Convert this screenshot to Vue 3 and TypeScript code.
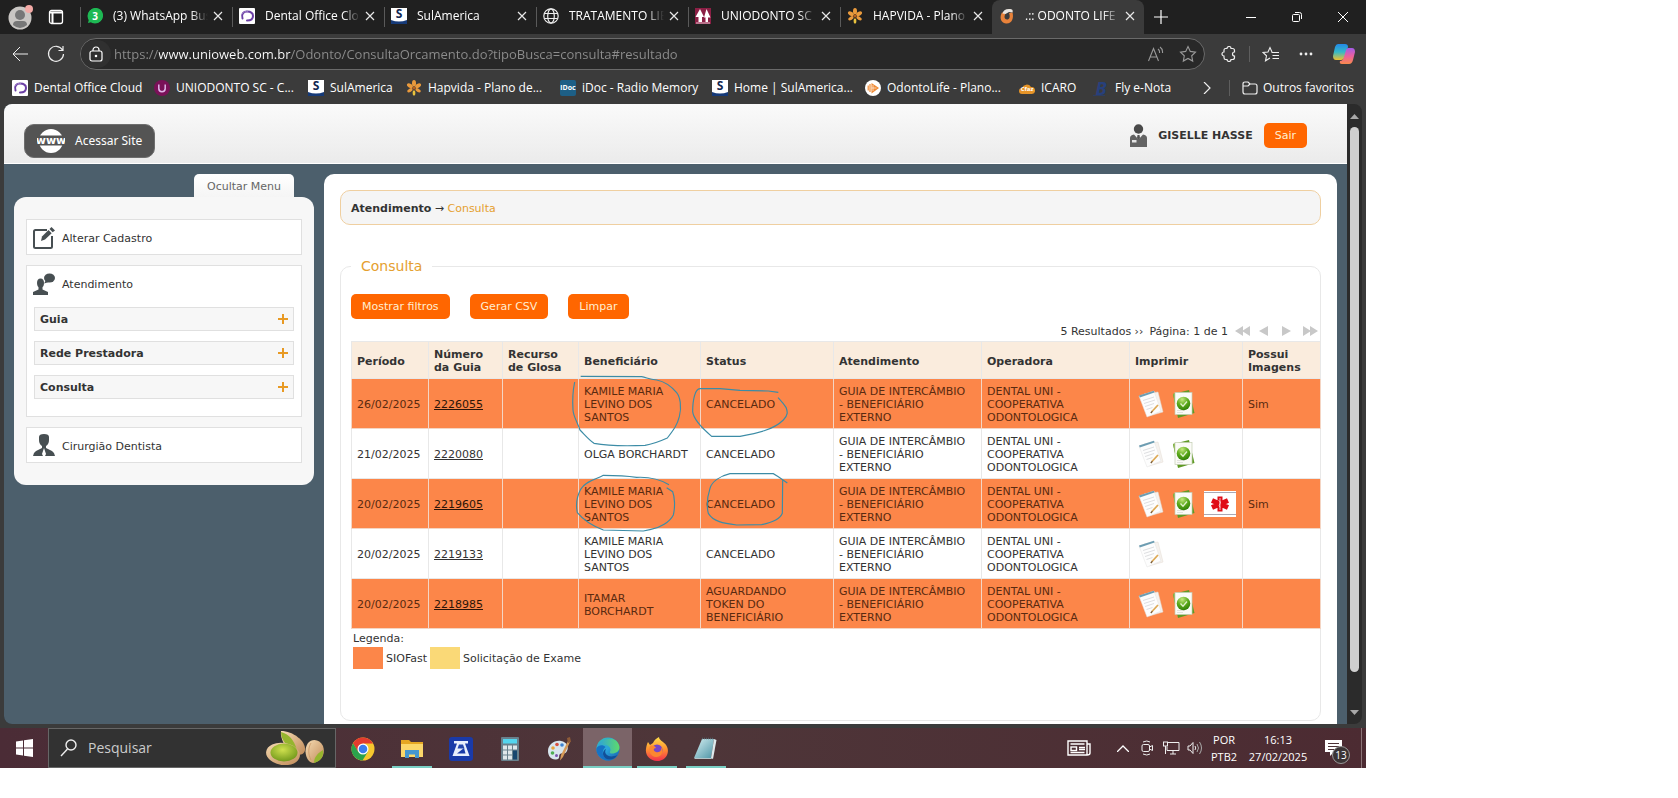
<script setup lang="ts">
import { ref } from 'vue'

interface Tab { icon: string; title: string; active?: boolean }
interface Bookmark { icon: string; title: string; width: number }
interface Row {
  date: string
  guide: string
  person: string
  status: string
  fast: boolean
  icons: string[]
  images: string
}

const tabs: Tab[] = [
  { icon: 'whats', title: '(3) WhatsApp Bus' },
  { icon: 'dental', title: 'Dental Office Clo' },
  { icon: 'sul', title: 'SulAmerica' },
  { icon: 'globe', title: 'TRATAMENTO LIB' },
  { icon: 'uniodonto', title: 'UNIODONTO SC' },
  { icon: 'flower', title: 'HAPVIDA - Plano' },
  { icon: 'odonto', title: '.:: ODONTO LIFE :', active: true },
]

const bookmarks: Bookmark[] = [
  { icon: 'dental', title: 'Dental Office Cloud', width: 142 },
  { icon: 'uni', title: 'UNIODONTO SC - C...', width: 154 },
  { icon: 'sul', title: 'SulAmerica', width: 98 },
  { icon: 'flower', title: 'Hapvida - Plano de...', width: 154 },
  { icon: 'idoc', title: 'iDoc - Radio Memory', width: 152 },
  { icon: 'sul', title: 'Home | SulAmerica...', width: 153 },
  { icon: 'life', title: 'OdontoLife - Plano...', width: 154 },
  { icon: 'cfaz', title: 'ICARO', width: 74 },
  { icon: 'fly', title: 'Fly e-Nota', width: 80 },
]

// Letters shown on top of the site icons that carry lettering.
const marks: Record<string, string> = { whats: '3', sul: 'S', idoc: 'iDoc', cfaz: 'Cfaz', fly: 'B' }

const url = ref('https://www.unioweb.com.br/Odonto/ConsultaOrcamento.do?tipoBusca=consulta#resultado')
const query = ref('')
const submenus = ['Guia', 'Rede Prestadora', 'Consulta']
const columns = ['Período', 'Número da Guia', 'Recurso de Glosa', 'Beneficiário', 'Status', 'Atendimento', 'Operadora', 'Imprimir', 'Possui Imagens']
const service = 'GUIA DE INTERCÂMBIO\n- BENEFICIÁRIO\nEXTERNO'
const operator = 'DENTAL UNI -\nCOOPERATIVA\nODONTOLOGICA'

const rows: Row[] = [
  { date: '26/02/2025', guide: '2226055', person: 'KAMILE MARIA\nLEVINO DOS\nSANTOS', status: 'CANCELADO', fast: true, icons: ['note', 'check'], images: 'Sim' },
  { date: '21/02/2025', guide: '2220080', person: 'OLGA BORCHARDT', status: 'CANCELADO', fast: false, icons: ['note', 'check'], images: '' },
  { date: '20/02/2025', guide: '2219605', person: 'KAMILE MARIA\nLEVINO DOS\nSANTOS', status: 'CANCELADO', fast: true, icons: ['note', 'check', 'medical'], images: 'Sim' },
  { date: '20/02/2025', guide: '2219133', person: 'KAMILE MARIA\nLEVINO DOS\nSANTOS', status: 'CANCELADO', fast: false, icons: ['note'], images: '' },
  { date: '20/02/2025', guide: '2218985', person: 'ITAMAR\nBORCHARDT', status: 'AGUARDANDO\nTOKEN DO\nBENEFICIÁRIO', fast: true, icons: ['note', 'check'], images: '' },
]

const printLabels: Record<string, string> = {
  note: 'Imprimir guia',
  check: 'Guia autorizada',
  medical: 'Urgência',
}

const apps = [
  { icon: 'chrome', label: 'Chrome', state: '' },
  { icon: 'folder', label: 'Explorador de Arquivos', state: 'open' },
  { icon: 'scan', label: 'Scanner', state: '' },
  { icon: 'calc', label: 'Calculadora', state: '' },
  { icon: 'paint', label: 'Paint', state: '' },
  { icon: 'edge', label: 'Edge', state: 'current' },
  { icon: 'firefox', label: 'Firefox', state: 'open' },
  { icon: 'notepad', label: 'Bloco de Notas', state: 'open' },
]
</script>

<template>
  <svg class="sprite" aria-hidden="true">
    <defs>
      <linearGradient id="gEdge" x1="0" y1="0" x2="1" y2="1"><stop offset="0" stop-color="#35c1b0" /><stop offset=".5" stop-color="#2aa3dc" /><stop offset="1" stop-color="#1559a8" /></linearGradient>
      <linearGradient id="gEdgeTop" x1="0" y1="0" x2="1" y2="0"><stop offset="0" stop-color="#2b9fe0" /><stop offset="1" stop-color="#5edb6b" /></linearGradient>
      <linearGradient id="gCopA" x1="0" y1="0" x2="0" y2="1"><stop offset="0" stop-color="#2389e8" /><stop offset=".5" stop-color="#35b9c8" /><stop offset="1" stop-color="#f0c02e" /></linearGradient>
      <linearGradient id="gCopB" x1="0" y1="0" x2="0" y2="1"><stop offset="0" stop-color="#a25be8" /><stop offset=".5" stop-color="#ec5f9e" /><stop offset="1" stop-color="#f88a4c" /></linearGradient>
      <linearGradient id="gFire" x1="0" y1="0" x2="0" y2="1"><stop offset="0" stop-color="#ffdf4a" /><stop offset=".5" stop-color="#ff9330" /><stop offset="1" stop-color="#f2304d" /></linearGradient>
      <radialGradient id="gGreen" cx=".4" cy=".2" r=".85"><stop offset="0" stop-color="#c3e67c" /><stop offset=".5" stop-color="#5dab1c" /><stop offset="1" stop-color="#2c7a05" /></radialGradient>
      <radialGradient id="gNut" cx=".45" cy=".35" r=".7"><stop offset="0" stop-color="#cfe04e" /><stop offset="1" stop-color="#6c9418" /></radialGradient>
      <linearGradient id="gShell" x1="0" y1="0" x2="1" y2="1"><stop offset="0" stop-color="#f6dcb4" /><stop offset="1" stop-color="#c08a58" /></linearGradient>
      <linearGradient id="gPad" x1="0" y1="0" x2="1" y2="1"><stop offset="0" stop-color="#d6f0f2" /><stop offset="1" stop-color="#4d94a6" /></linearGradient>
    </defs>
    <symbol id="whats" viewBox="0 0 16 16"><path d="M1 15l1-4a7.500 7.500 0 1 1 3 3z" fill="#1eb954" /><circle cx="8" cy="8" r="7.500" fill="#1eb954" /></symbol>
    <symbol id="dental" viewBox="0 0 16 16"><rect width="16" height="16" rx="1" fill="#fff" /><path d="M3.500 10.500C2 6 4.500 3.500 8 3.500c3.500 0 6 1.500 6 4.500s-2.500 4.500-6 4.500" fill="none" stroke="#6b3fa5" stroke-width="2" stroke-linecap="round" /><path d="M3 6c1.500-2.500 4-3 6-2.500" fill="none" stroke="#9a7bc6" stroke-width="1" /></symbol>
    <symbol id="sul" viewBox="0 0 16 16"><rect width="16" height="16" fill="#fff" /><path d="M0 12q8 3 16 0v4H0z" fill="#163a78" /></symbol>
    <symbol id="globe" viewBox="0 0 16 16"><g fill="none" stroke="#eee" stroke-width="1.200"><circle cx="8" cy="8" r="7.200" /><ellipse cx="8" cy="8" rx="3.300" ry="7.200" /><path d="M1.500 5.500h13M1.500 10.500h13" /></g></symbol>
    <symbol id="uniodonto" viewBox="0 0 16 16"><rect width="16" height="16" fill="#8b1f45" /><path d="M5 1l4 8h-2v5H3.500V9H.5zM11.500 1l4 8.500H13v4.500h-2.500V9.500H9z" fill="#fff" /><path d="M1 15h14" stroke="#e9c7d3" stroke-width="1" /></symbol>
    <symbol id="flower" viewBox="0 0 16 16"><g fill="#ea9a3c"><ellipse cx="8" cy="3.300" rx="2" ry="3.200" /><ellipse cx="8" cy="3.300" rx="2" ry="3.200" transform="rotate(60 8 8)" /><ellipse cx="8" cy="3.300" rx="2" ry="3.200" transform="rotate(-60 8 8)" /><ellipse cx="8" cy="3.300" rx="1.700" ry="3" transform="rotate(120 8 8)" /><ellipse cx="8" cy="3.300" rx="1.700" ry="3" transform="rotate(-120 8 8)" /></g><ellipse cx="8" cy="13" rx="1.400" ry="2.800" fill="#e8c23e" /><circle cx="8" cy="8" r="1.500" fill="#b8601e" /></symbol>
    <symbol id="odonto" viewBox="0 0 16 16"><path d="M3 4.500C.5 8 1 15 7 15.500c6 .5 8-5.500 6.500-11l-3.500.5c1.500 4 .5 6.500-2 6.500S4.500 8.500 7 5z" fill="#e8823a" /><path d="M3.500 5.500C4 2 8 0 13 1.500c1 1 .8 2 .5 3L10 4 6.500 6z" fill="#e9e4de" /></symbol>
    <symbol id="uni" viewBox="0 0 16 16"><circle cx="8" cy="8" r="8" fill="#7a1158" /><path d="M4.800 4.500v4a3.200 3.200 0 0 0 6.400 0v-4" fill="none" stroke="#e0b6e8" stroke-width="1.500" /></symbol>
    <symbol id="idoc" viewBox="0 0 16 16"><rect width="16" height="16" rx="2" fill="#1d5f86" /></symbol>
    <symbol id="life" viewBox="0 0 16 16"><circle cx="8" cy="8" r="8" fill="#fff" /><path d="M6.500 3l7.500 5-7.500 5.500z" fill="#ef8a34" /><path d="M3.200 5.500v5M5 4v8" stroke="#ef8a34" stroke-width="1.200" /><path d="M8 5v6M6.500 8h5" stroke="#fff" stroke-width=".6" /></symbol>
    <symbol id="cfaz" viewBox="0 0 16 16"><path d="M3 13a3 3 0 0 1 0-6 5 5 0 0 1 9-1 3.500 3.500 0 0 1 1 7z" fill="#e69428" /></symbol>
    <symbol id="fly" viewBox="0 0 16 16"><path d="M0 15.500h12" stroke="#27407c" stroke-width=".6" /></symbol>
    <symbol id="note" viewBox="0 0 26 28"><path d="M6 4l14-2 5 20-14 4z" fill="#f6f2ee" stroke="#e2dad2" stroke-width=".5" /><path d="M1 6l15-5 7 20-14 6z" fill="#fdfdfd" stroke="#e2e2e2" stroke-width=".5" /><path d="M1 5.500L16 .8l.5 1.700L1.800 7.500z" fill="#6d9db2" /><path d="M5 10.500l11-3.500M6 13.500l11-3.500M7 16.500l9-3M8.500 19.500l6-2" stroke="#d4d6d8" stroke-width=".8" /><path d="M14 21.500l6-6.500" stroke="#dda955" stroke-width="1.800" /><path d="M12.800 23l1.600-1.800" stroke="#7a5a34" stroke-width="1.300" /></symbol>
    <symbol id="check" viewBox="0 0 24 28"><path d="M1 4l16-4 1 4L22.500 23 6 28z" fill="#5f9a25" /><path d="M1 4l3-1 2 24z" fill="#86b548" /><rect x="3" y="2.500" width="17" height="22" fill="#fbfbf7" stroke="#c3cdb2" stroke-width=".7" /><path d="M5 20.500h8M5 22.500h6" stroke="#dcdcd6" stroke-width=".8" /><circle cx="11.500" cy="13.500" r="6.800" fill="url(#gGreen)" /><path d="M8.500 13.500l2.500 2.700 4-4.700" fill="none" stroke="#e2f0cc" stroke-width="1.300" /></symbol>
    <symbol id="medical" viewBox="0 0 32 26"><rect width="32" height="26" fill="#fff" /><path d="M0 1.500h32M0 23.500h32" stroke="#aaa8b4" stroke-width="1" /><g stroke="#e00d16" stroke-width="5"><path d="M16 5.500v15M8 9.500l16 7M8 16.500l16-7" /></g><path d="M16 7v12M14.500 9.500q3 1 1.500 3t0 4" fill="none" stroke="#fff" stroke-width=".7" /></symbol>
    <symbol id="chrome" viewBox="0 0 24 24"><circle cx="12" cy="12" r="11.500" fill="#f7c72e" /><path d="M2 6.200A11.500 11.500 0 0 1 22 6.500H12l-5 8.500z" fill="#e33b2e" /><path d="M2 6.200A11.500 11.500 0 0 0 11.500 23.500L17 14.500H7z" fill="#2ba24c" /><circle cx="12" cy="12" r="5.500" fill="#fff" /><circle cx="12" cy="12" r="4.300" fill="#3b7ded" /></symbol>
    <symbol id="folder" viewBox="0 0 24 24"><path d="M1 3h8l2 2h12v15H1z" fill="#e5a723" /><path d="M1 7h22v13H1z" fill="#fbd76a" /><path d="M5 21v-8h14v8h-4v-3.500H9V21z" fill="#4597d0" /></symbol>
    <symbol id="scan" viewBox="0 0 24 24"><rect width="24" height="24" rx="3" fill="#1a3aa8" /><path d="M5 4h14v2.500H5zM8 6.500h8L20.500 19h-17z" fill="#e9eefc" /><path d="M10 7.500h4l1.500 4h-7z" fill="#2747ac" /><path d="M8 16.500l7-5.500 1.500 5.500z" fill="#1a3aa8" /></symbol>
    <symbol id="calc" viewBox="0 0 24 24"><rect x="3" width="18" height="24" rx="1" fill="#68808c" /><rect x="5" y="2" width="14" height="4.500" fill="#54d5ee" /><g fill="#dfe7ea"><path d="M5 8.500h4v4H5zM10 8.500h4v4h-4zM15 8.500h4v4h-4zM5 13.500h4v4H5zM10 13.500h4v4h-4zM5 18.500h4v4H5zM10 18.500h4v4h-4z" /></g><path d="M15 13.500h4v9h-4z" fill="#18476e" /></symbol>
    <symbol id="paint" viewBox="0 0 24 24"><path d="M1 14C1 8 7 3 14 4c6 1 8 6 6 10s-5 1-7 3 1 5-4 5.500C4 23 1 19 1 14z" fill="#d8e6ee" /><circle cx="6" cy="11" r="1.800" fill="#e8a33b" /><circle cx="10" cy="7.500" r="1.800" fill="#d7503f" /><circle cx="15" cy="8" r="1.800" fill="#3e83d0" /><circle cx="5.500" cy="16" r="1.800" fill="#4dae54" /><circle cx="9.500" cy="18.500" r="1.500" fill="#7b55b0" /><path d="M21 4l2 1-7 15-3 3.500 1-5.500z" fill="#d69a58" /><path d="M20 1l3-1 1 5-3 1z" fill="#8f5c38" /></symbol>
    <symbol id="edge" viewBox="0 0 24 24"><circle cx="12" cy="12" r="11.500" fill="url(#gEdge)" /><path d="M.8 10.500C3 2 19-3 23 8c2 6-3 9-8 8.500-2-.5-1-2-.5-3.500C14 6 4 7 .8 10.500z" fill="url(#gEdgeTop)" /><path d="M9.500 10c-5 4-3 12 5 13.300C6 25-1 17 .6 11 3 7.500 7 7.500 9.500 10z" fill="#1672c4" /><path d="M10 12c-3 5 3 10 11.500 6C17 25 8 23.500 7 17c0-2.500 1-4 3-5z" fill="#124f98" /></symbol>
    <symbol id="firefox" viewBox="0 0 24 24"><path d="M3 5l2 3 3-2c1-3 4-5 6-6 0 4 7 5 8.500 11C24.500 18 19 24 12 24S0 18 1 12c.3-3 1-5 2-7z" fill="url(#gFire)" /><circle cx="12" cy="13" r="5.500" fill="#7546c8" /><path d="M5 9c3-1 5 0 6 2-3 0-3 3 0 4 4 1 6-2 5-5 3 4 1 10-5 10-5 0-8-6-6-11z" fill="#fb8631" /></symbol>
    <symbol id="notepad" viewBox="0 0 24 24"><path d="M8 2h12l-3 19H0z" fill="url(#gPad)" /><path d="M20 2l2.500 1-3.500 19-2-1z" fill="#dfe9eb" /><path d="M0 21h17l2 1H1z" fill="#b4c4c8" /><path d="M8 1.500h12" stroke="#56636c" stroke-width="1.500" stroke-dasharray="1 1" /></symbol>
    <symbol id="pistachio" viewBox="0 0 58 34"><path d="M15 0c12 0 25 10 24 19-1 6-9 6-14 2-6-5-11-13-10-21z" fill="url(#gShell)" /><path d="M15 1c8 2 13 8 16 18C22 17 15 10 15 1z" fill="#95b52e" /><ellipse cx="17" cy="23" rx="17" ry="11" fill="url(#gShell)" transform="rotate(8 17 23)" /><ellipse cx="18" cy="21.500" rx="13.500" ry="9" fill="url(#gNut)" /><path d="M42 12c4-5 12-4 15 3 3 8-2 16-10 17-7-1-10-13-5-20z" fill="url(#gShell)" /><path d="M57 19c1 6-2 11-9 13 0-6 4-10 9-13z" fill="#95b52e" /><path d="M45 12c-3 5-3 11 0 17" fill="none" stroke="#c9935f" stroke-width=".7" /></symbol>
  </svg>

  <div class="desktop">
    <header class="tabstrip">
      <button class="avatar" aria-label="Perfil">
        <svg width="26" height="26" viewBox="0 0 26 26"><circle cx="12" cy="14" r="11.500" fill="#c9c6c3" /><circle cx="12" cy="11" r="5" fill="#777" /><path d="M5 21q0-4 4-4h6q4 0 4 4-7 6-14 0z" fill="#777" /><circle cx="21" cy="5" r="4" fill="#f3aaa6" /></svg>
      </button>
      <button class="tabmenu" aria-label="Menu de guias">
        <svg width="16" height="16" viewBox="0 0 16 16" fill="none" stroke="#fff" stroke-width="1.300"><rect x="1.500" y="1.500" width="13" height="13" rx="2" /><path d="M1.500 3.500h13M4.500 4v10.500" stroke-width="2" /></svg>
      </button>
      <div v-for="tab in tabs" :key="tab.title" class="tab" :class="{ active: tab.active }">
        <span class="fav" aria-hidden="true"><svg><use :href="'#' + tab.icon" /></svg><b v-if="marks[tab.icon]" :class="'m-' + tab.icon">{{ marks[tab.icon] }}</b></span>
        <button class="tab-title">{{ tab.title }}</button>
        <button class="tab-close" :aria-label="'Fechar ' + tab.title">
          <svg width="10" height="10" viewBox="0 0 10 10" stroke="#e8e8e8" stroke-width="1.200"><path d="M1 1l8 8M9 1l-8 8" /></svg>
        </button>
      </div>
      <button class="newtab" aria-label="Nova guia"><svg width="14" height="14" viewBox="0 0 14 14" stroke="#fff" stroke-width="1.200"><path d="M7 0v14M0 7h14" /></svg></button>
      <div class="winctl">
        <button aria-label="Minimizar"><svg width="10" height="10" viewBox="0 0 10 10" stroke="#fff"><path d="M0 5.500h10" /></svg></button>
        <button aria-label="Restaurar"><svg width="10" height="10" viewBox="0 0 10 10" fill="none" stroke="#fff"><rect x=".5" y="2.500" width="7" height="7" rx="1" /><path d="M3 .5h4.500q2 0 2 2V7" /></svg></button>
        <button aria-label="Fechar"><svg width="10" height="10" viewBox="0 0 10 10" stroke="#fff"><path d="M0 0l10 10M10 0L0 10" /></svg></button>
      </div>
    </header>

    <div class="toolbar">
      <button class="nav" aria-label="Voltar"><svg width="16" height="16" viewBox="0 0 16 16" fill="none" stroke="#eee"><path d="M16 8H1M8 1L1 8l7 7" /></svg></button>
      <button class="nav" aria-label="Atualizar"><svg width="18" height="18" viewBox="0 0 18 18" fill="none" stroke="#eee" stroke-width="1.200"><path d="M15.500 5A7.500 7.500 0 1 0 16.500 9M16 1v4.500h-4.500" /></svg></button>
      <div class="address">
        <span class="lock"><svg width="14" height="16" viewBox="0 0 14 16" fill="none" stroke="#fff" stroke-width="1.200"><rect x="1" y="5" width="12" height="10" rx="2" /><path d="M4 5V4a3 3 0 0 1 6 0v1" /><circle cx="7" cy="10" r=".7" fill="#fff" /></svg></span>
        <input v-model="url" class="url" type="text" aria-label="Endereço" />
        <button class="addr-btn" aria-label="Ler em voz alta"><svg width="16" height="16" viewBox="0 0 16 16" fill="none" stroke="#999" stroke-width="1.100"><path d="M.5 15L5.500 2.500l5 12.500M2.500 11h6M10 3q2 1.500 1.500 4M12 1q3 2 2.500 6" /></svg></button>
        <button class="addr-btn" aria-label="Favoritar"><svg width="18" height="18" viewBox="0 0 18 18" fill="none" stroke="#999" stroke-width="1.100"><path d="M9 1.500l2.300 4.900 5.200.7-3.800 3.700 1 5.300L9 13.500 4.300 16.100l1-5.300L1.500 7.100l5.200-.7z" /></svg></button>
      </div>
      <button class="tool" aria-label="Extensões"><svg width="16" height="16" viewBox="0 0 16 16" fill="none" stroke="#eee" stroke-width="1.200"><path d="M4.500 2.500H6a2 2 0 0 1 4 0h1.500q2 0 2 2V6a2 2 0 1 0 0 4v1.500q0 2-2 2H10a2 2 0 0 1-4 0H4.500q-1.500 0-1.500-2V10a2 2 0 0 1 0-4V4.500q0-2 1.500-2z" /></svg></button>
      <span class="vline"></span>
      <button class="tool" aria-label="Favoritos"><svg width="17" height="16" viewBox="0 0 17 16" fill="none" stroke="#eee" stroke-width="1.100"><path d="M10 6l-2-4.500L6 6l-5 .5 3.500 3.300-1 5L8 12M9.500 6.500H17M10.500 9.500H17M10.500 12.500H17" /></svg></button>
      <button class="tool more" aria-label="Mais"><svg width="14" height="4" viewBox="0 0 14 4" fill="#eee"><circle cx="2" cy="2" r="1.400" /><circle cx="7" cy="2" r="1.400" /><circle cx="12" cy="2" r="1.400" /></svg></button>
      <button class="tool copilot" aria-label="Copilot"><svg width="22" height="20" viewBox="0 0 22 20"><path d="M5 0h7q3 0 3 3l-3 9q-1 4-4 4H3q-3 0-3-4L2 3q1-3 3-3z" fill="url(#gCopA)" /><path d="M15 4h4q3 0 3 4l-2 8q-1 4-4 4H9q-3 0-2-3 3 0 4-4l2-7q1-2 2-2z" fill="url(#gCopB)" /></svg></button>
    </div>

    <nav class="bookmarks" aria-label="Favoritos">
      <a v-for="b in bookmarks" :key="b.title" href="#" :style="{ flexBasis: b.width + 'px' }">
        <span class="fav" aria-hidden="true"><svg><use :href="'#' + b.icon" /></svg><b v-if="marks[b.icon]" :class="'m-' + b.icon">{{ marks[b.icon] }}</b></span>{{ b.title }}
      </a>
      <button class="chev" aria-label="Mais favoritos"><svg width="8" height="12" viewBox="0 0 8 12" fill="none" stroke="#eee" stroke-width="1.200"><path d="M1 0l6 6-6 6" /></svg></button>
      <span class="vline"></span>
      <a href="#" class="others"><svg width="16" height="14" viewBox="0 0 16 14" fill="none" stroke="#eee" stroke-width="1.200"><path d="M1 3q0-2 2-2h3l2 2h5q2 0 2 2v6q0 2-2 2H3q-2 0-2-2zM1 5h5l2-2" /></svg>Outros favoritos</a>
    </nav>

    <div class="viewport">
      <div class="page">
        <div class="banner">
          <a href="#" class="site">
            <svg width="28" height="24" viewBox="0 0 28 24" aria-hidden="true"><circle cx="14" cy="12" r="12" fill="#fff" /><path d="M0 6.500h28v10H0z" fill="#545454" /><text x="14" y="15" text-anchor="middle" font-size="11" font-weight="700" font-family="DejaVu Sans, sans-serif" fill="#fff">www</text></svg>
            Acessar Site
          </a>
          <div class="user">
            <svg width="17" height="23" viewBox="0 0 17 23"><circle cx="8.500" cy="5" r="4.700" fill="#4a4a4a" /><path d="M0 23v-9q0-3 4-3.500l4.500 5 4.500-5q4 .5 4 3.500v9z" fill="#636363" /><path d="M7.500 11h2l.5 3-1.500 2L7 14z" fill="#555" /><path d="M2 16h4.500v2.500H2z" fill="#e4e4e4" /></svg>
            <strong>GISELLE HASSE</strong>
            <button class="btn">Sair</button>
          </div>
        </div>

        <div class="body">
          <aside class="side">
            <button class="hide-menu">Ocultar Menu</button>
            <nav class="menu" aria-label="Menu principal">
              <div class="box">
                <a href="#"><svg width="22" height="22" viewBox="0 0 22 22" fill="none" stroke="#474f52"><path d="M14 3H2.500Q1 3 1 4.500v15Q1 21 2.500 21h15q1.500 0 1.500-1.500V9" stroke-width="2" /><path d="M8 14l1-4.500L15.500 3l3.200 3.200L12 12.500z" fill="#474f52" stroke="none" /><path d="M16.500 2l2-2L22 3.500l-2.300 1.700z" fill="#474f52" stroke="none" /></svg>Alterar Cadastro</a>
              </div>
              <div class="box">
                <a href="#"><svg width="22" height="22" viewBox="0 0 22 22" fill="#474f52"><ellipse cx="7.500" cy="10" rx="3.500" ry="4.500" /><path d="M5.500 12h4v4.500l5.500 2.500v3H0v-3l5.500-2.500z" /><ellipse cx="16.500" cy="5" rx="5.500" ry="4.600" /><path d="M13 7l-2 3.500 5-1.500z" /></svg>Atendimento</a>
                <div class="subs">
                  <button v-for="s in submenus" :key="s" class="sub">
                    {{ s }}<svg width="10" height="10" viewBox="0 0 10 10" stroke="#e89a24" stroke-width="2"><path d="M5 0v10M0 5h10" /></svg>
                  </button>
                </div>
              </div>
              <div class="box">
                <a href="#"><svg width="22" height="24" viewBox="0 0 22 24" fill="#474f52"><path d="M6 3q0-3 5-3t5 3v3q0 4-3 6v2l6 3q3 2 3 5H0q0-3 3-5l6-3v-2Q6 10 6 6z" /><path d="M11 14l2 6-2 4-2-4z" fill="#fff" /></svg>Cirurgião Dentista</a>
              </div>
            </nav>
          </aside>

          <main class="content">
            <p class="crumb"><strong>Atendimento</strong> → <a href="#">Consulta</a></p>
            <fieldset>
              <legend>Consulta</legend>
              <div class="actions">
                <button class="btn">Mostrar filtros</button>
                <button class="btn">Gerar CSV</button>
                <button class="btn">Limpar</button>
              </div>
              <div class="pager">
                <span>5 Resultados ››</span><span>Página: 1 de 1</span>
                <button aria-label="Primeira"><svg width="15" height="10" viewBox="0 0 15 10" fill="#c8c8c8"><path d="M8 0v10L0 5zM15 0v10L7 5z" /></svg></button>
                <button aria-label="Anterior"><svg width="15" height="10" viewBox="0 0 15 10" fill="#c8c8c8"><path d="M11 0v10L2 5z" /></svg></button>
                <button aria-label="Próxima"><svg width="15" height="10" viewBox="0 0 15 10" fill="#c8c8c8"><path d="M3 0v10l9-5z" /></svg></button>
                <button aria-label="Última"><svg width="15" height="10" viewBox="0 0 15 10" fill="#c8c8c8"><path d="M0 0v10l8-5zM7 0v10l8-5z" /></svg></button>
              </div>
              <div class="grid">
                <table>
                  <colgroup>
                    <col v-for="(c, i) in columns" :key="c" :class="'c' + i" />
                  </colgroup>
                  <thead><tr><th v-for="c in columns" :key="c" scope="col">{{ c }}</th></tr></thead>
                  <tbody>
                    <tr v-for="r in rows" :key="r.guide" :class="{ fast: r.fast }">
                      <td>{{ r.date }}</td>
                      <td><a href="#">{{ r.guide }}</a></td>
                      <td></td>
                      <td>{{ r.person }}</td>
                      <td>{{ r.status }}</td>
                      <td>{{ service }}</td>
                      <td>{{ operator }}</td>
                      <td class="print-cell">
                        <div class="prints">
                          <button v-for="i in r.icons" :key="i" :aria-label="printLabels[i]"><svg :class="i"><use :href="'#' + i" /></svg></button>
                        </div>
                      </td>
                      <td>{{ r.images }}</td>
                    </tr>
                  </tbody>
                </table>
                <svg class="ink" viewBox="33 63 1440 630" fill="none" stroke="#3c8ca6" stroke-width="3.500" aria-hidden="true">
                  <path d="M704 186C698 215 697 240 699 270C700 290 712 305 720 330C735 345 745 358 762 370C800 377 870 378 915 376C940 372 960 364 982 354C1000 330 1012 315 1018 290C1026 260 1020 230 1010 218C995 200 975 185 950 180C925 178 920 172 905 170L722 169" />
                  <path d="M1315 217L1285 213L1200 211L1140 206L1080 206C1065 206 1058 240 1058 275C1060 295 1075 315 1115 349L1200 349C1250 340 1300 330 1330 300C1345 285 1343 275 1338 262C1330 250 1325 245 1314 233" />
                  <path d="M987 494C960 478 930 470 890 472C850 466 820 466 790 466C770 478 740 480 722 508C708 535 708 560 712 578C730 600 750 615 790 630L910 633L930 629C960 625 990 605 1000 585C1006 560 1004 530 998 515L980 503" />
                  <path d="M1342 489L1315 470L1300 461L1170 461C1140 468 1115 485 1110 505C1102 530 1100 560 1105 580C1120 605 1150 610 1190 615L1265 614C1295 608 1320 598 1327 580L1328 480" />
                </svg>
              </div>
              <div class="legend-title">Legenda:</div>
              <div class="legend-row">
                <span class="swatch orange"></span><span>SIOFast</span>
                <span class="swatch yellow"></span><span>Solicitação de Exame</span>
              </div>
            </fieldset>
          </main>
        </div>
      </div>
      <div class="scroll" aria-hidden="true">
        <svg width="9" height="5" viewBox="0 0 9 5" fill="#a8a8a8"><path d="M0 5l4.500-5L9 5z" /></svg>
        <div class="thumb"></div>
        <svg width="9" height="5" viewBox="0 0 9 5" fill="#a8a8a8"><path d="M0 0l4.500 5L9 0z" /></svg>
      </div>
    </div>

    <footer class="taskbar">
      <button class="start" aria-label="Iniciar"><svg width="17" height="18" viewBox="0 0 17 18" fill="#fff"><path d="M0 2.500l7-1V8.500H0zM8 1.300L17 0v8.500H8zM0 9.500h7v7l-7-1zM8 9.500h9V18l-9-1.300z" /></svg></button>
      <label class="search">
        <svg width="17" height="18" viewBox="0 0 17 18" fill="none" stroke="#eee" stroke-width="1.400"><circle cx="11" cy="6" r="5" /><path d="M7.500 10L1 17" /></svg>
        <input v-model="query" type="text" placeholder="Pesquisar" aria-label="Pesquisar" />
        <svg class="nuts" aria-hidden="true"><use href="#pistachio" /></svg>
      </label>
      <button v-for="a in apps" :key="a.icon" class="app" :class="a.state" :aria-label="a.label"><svg><use :href="'#' + a.icon" /></svg></button>
      <div class="tray">
        <button class="news" aria-label="Notícias"><svg width="24" height="16" viewBox="0 0 24 16" fill="none" stroke="#fff" stroke-width="1.400"><path d="M1 1h19v14H1zM20 4h3v9q0 2-3 2" /><path d="M3.500 4h14M12 7.500h6M12 9.500h6M3.500 12.500h14" /><rect x="4" y="7" width="5.500" height="3.500" /></svg></button>
        <button class="tr" aria-label="Mostrar ícones ocultos"><svg width="12" height="7" viewBox="0 0 12 7" fill="none" stroke="#fff" stroke-width="1.300"><path d="M0 7l6-6 6 6" /></svg></button>
        <button class="tr" aria-label="Câmera"><svg width="12" height="16" viewBox="0 0 12 16" fill="none" stroke="#eee"><rect x="1" y="4.500" width="7.500" height="7" rx="1.500" /><path d="M8.500 7l3-1.500v5L8.500 9M2 2q4-2 7 0M2 14q4 2 7 0" /></svg></button>
        <button class="tr" aria-label="Rede"><svg width="17" height="14" viewBox="0 0 17 14" fill="none" stroke="#eee"><path d="M5 1.500h11v8H4V6M10 9.500v3.500M7 13h6M2.500 5v8" /><rect x=".5" y="1" width="4" height="4" /></svg></button>
        <button class="tr" aria-label="Volume"><svg width="16" height="14" viewBox="0 0 16 14" fill="none" stroke="#eee"><path d="M1 5h2l3-3.500v11L3 9H1zM8 5q1.500 2 0 4" /><path d="M10 3q3 4 0 8M12.500 1q4 6 0 12" stroke="#aaa" /></svg></button>
        <div class="lang"><span>POR</span><span>PTB2</span></div>
        <div class="clock"><span>16:13</span><span>27/02/2025</span></div>
        <button class="notif" aria-label="Notificações">
          <svg width="17" height="17" viewBox="0 0 17 17"><path d="M0 0h17v12h-8l-4 4v-4H0z" fill="#fff" /><path d="M3 3.500h11M3 6.500h11M3 9.500h7" stroke="#4d3237" /></svg>
          <span class="badge">13</span>
        </button>
        <span class="peek"></span>
      </div>
    </footer>
  </div>
</template>

<style>
html, body { margin: 0; background: #fff; }
#app { padding-right: 312px; }
</style>

<style scoped>
* { box-sizing: border-box; }
button { border: 0; padding: 0; margin: 0; background: none; color: inherit; font: inherit; cursor: pointer; }
svg { display: block; flex: none; }
a { color: inherit; text-decoration: none; }
.sprite { position: absolute; width: 0; height: 0; }
.desktop { height: calc(100vh - 30px); min-width: 1240px; display: flex; flex-direction: column; background: #3b3b3b; color: #fff; font: 12px/16px "Open Sans", "Noto Sans", sans-serif; overflow: hidden; }
.fav { flex: none; display: grid; place-items: center; width: 16px; height: 16px; }
.fav > * { grid-area: 1 / 1; }
.fav svg { width: 16px; height: 16px; }
.fav b { font-size: 10px; line-height: 16px; }
.fav .m-sul { font-size: 12px; line-height: 12px; align-self: start; color: #12264f; }
.fav .m-idoc { font-size: 7px; }
.fav .m-cfaz { font-size: 6px; line-height: 18px; }
.fav .m-fly { font-size: 18px; font-style: italic; color: #27407c; }

.tabstrip { flex: none; height: 34px; display: flex; align-items: center; background: #202020; }
.avatar { padding-left: 8px; width: 48px; }
.tabmenu { width: 32px; }
.tab { position: relative; flex: 0 1 152px; height: 34px; min-width: 0; display: flex; align-items: center; padding: 0 4px 2px 7px; }
.tab::before { content: ""; position: absolute; left: 0; top: 7px; width: 1px; height: 20px; background: #5a5a5a; }
.tab.active { background: #3b3b3b; border-radius: 8px 8px 0 0; }
.tab.active::before { display: none; }
.tab-title { flex: 1; min-width: 0; margin-left: 10px; height: 20px; text-align: left; white-space: nowrap; overflow: hidden; mask-image: linear-gradient(90deg, #000 82%, transparent 100%); }
.tab-close { width: 20px; height: 20px; display: grid; place-items: center; }
.newtab { width: 34px; height: 30px; display: grid; place-items: center; }
.winctl { margin-left: auto; display: flex; }
.winctl button { width: 46px; height: 34px; display: grid; place-items: center; }

.toolbar { flex: none; height: 40px; padding-left: 2px; display: flex; align-items: center; }
.nav { width: 36px; height: 32px; display: grid; place-items: center; }
.nav + .nav { margin-right: 6px; }
.address { flex: 1; min-width: 0; height: 32px; display: flex; align-items: center; border: 1px solid #6a6a6a; border-radius: 16px; background: #282828; }
.lock { width: 30px; height: 28px; border-radius: 14px; background: #303030; display: grid; place-items: center; }
.url { flex: 1; min-width: 0; height: 28px; border: 0; padding: 0; outline: 0; margin-left: 3px; font: 13px/20px "Open Sans", "Noto Sans", sans-serif; color: transparent; background: linear-gradient(90deg, #8d8d8d 0 45px, #fff 45px 177px, #8d8d8d 177px); background-clip: text; -webkit-background-clip: text; }
.addr-btn { width: 32px; height: 28px; display: grid; place-items: center; }
.tool { width: 40px; height: 32px; display: grid; place-items: center; }
.address + .tool { margin-left: 4px; }
.tool.more { width: 32px; }
.tool.copilot { width: 44px; }
.vline { width: 1px; height: 16px; background: #5e5e5e; }

.bookmarks { flex: none; height: 30px; padding: 0 12px 2px 12px; display: flex; align-items: center; font-size: 12px; }
.bookmarks a { flex: none; min-width: 0; display: flex; align-items: center; gap: 6px; white-space: nowrap; }
.chev { width: 16px; margin: 0 14px 0 auto; display: grid; place-items: center; }
.bookmarks .others { margin-left: 12px; gap: 5px; }

.viewport { flex: 1; min-height: 0; margin: 0 4px 4px; display: flex; border-radius: 8px; overflow: hidden; background: #2b2b2b; }
.page { flex: 1; min-width: 0; display: flex; flex-direction: column; overflow: hidden; background: #4c5f6c; color: #333; font: 11px/13px "DejaVu Sans", Verdana, sans-serif; }
.scroll { width: 15px; display: flex; flex-direction: column; align-items: center; padding: 10px 0 9px; gap: 8px; }
.thumb { flex: 1; width: 9px; border-radius: 5px; background: #cfcfcf; margin-bottom: 30px; }

.banner { flex: none; height: 60px; padding: 0 40px 0 20px; display: flex; justify-content: space-between; align-items: center; background: linear-gradient(#fafafa, #ebebeb); border-bottom: 1px solid #fff; }
.site { height: 34px; margin-top: 14px; padding: 0 12px; display: flex; align-items: center; gap: 10px; border: 1px solid #6e6e6e; border-radius: 10px; background: #545454; color: #fff; font: 12px/16px "Noto Sans", "Open Sans", sans-serif; }
.user { display: flex; align-items: center; gap: 11px; margin-top: 4px; }
.btn { height: 25px; padding: 0 11px; border-radius: 5px; background: #f60; color: #ffeed0; font: 11px/13px "DejaVu Sans", Verdana, sans-serif; white-space: nowrap; }

.body { flex: 1; display: flex; align-items: stretch; gap: 10px; padding: 10px 10px 0; min-height: 0; }
.side { flex: none; width: 300px; display: flex; flex-direction: column; align-items: flex-end; }
.hide-menu { width: 100px; height: 23px; padding-top: 1px; margin-right: 20px; border-radius: 5px 5px 0 0; background: linear-gradient(#fff, #f5f5f5); color: #666; }
.menu { width: 100%; padding: 22px 12px; border-radius: 12px; background: #f7f7f7; display: flex; flex-direction: column; gap: 10px; }
.box { border: 1px solid #e0e0e0; background: #fff; }
.box > a { height: 34px; padding: 2px 0 0 6px; display: flex; align-items: center; gap: 7px; }
.subs { display: flex; flex-direction: column; gap: 10px; padding: 7px 7px 17px; }
.sub { height: 24px; padding: 0 5px; border: 1px solid #e0e0e0; background: #f7f7f7; display: flex; align-items: center; justify-content: space-between; font-weight: 700; }

.content { flex: 1; min-width: 0; padding: 16px; border-radius: 10px 10px 0 0; background: #fff; }
.crumb { height: 35px; margin: 0; padding: 11px 10px 9px; border: 1px solid #efcfa0; border-radius: 10px; background: #f5f5f5; }
.crumb a, legend { color: #e5a02f; }
fieldset { margin: 33px 0 0; min-width: 0; padding: 20px 0 51px 10px; border: 1px solid #e8e8e8; border-radius: 10px; }
legend { padding: 0 10px; font-size: 14px; line-height: 16px; }
.actions { display: flex; gap: 20px; }
.pager { display: flex; justify-content: flex-end; align-items: center; gap: 6px; height: 22px; padding: 2px 2px 0 0; }
.pager button { margin-left: 1px; }
.pager button:last-child { margin-left: 3px; }

.grid { position: relative; }
table { width: 100%; border-collapse: collapse; table-layout: fixed; }
th, td { border: 1px solid #e8e8e8; padding: 6px 5px 4px; text-align: left; vertical-align: middle; }
th { height: 37px; padding: 5px 5px 3px; background: #faecdd; font-weight: 700; }
td { height: 50px; white-space: pre-line; }
.print-cell { padding-top: 5px; }
td a { text-decoration: underline; }
.fast td { background: #fc8649; color: #5a2a10; border-color: #f4d5c4; }
.fast td a { color: #2c1508; }
.c0 { width: 77px; } .c1 { width: 74px; } .c2 { width: 76px; } .c3 { width: 122px; } .c4 { width: 133px; }
.c5 { width: 148px; } .c6 { width: 148px; } .c7 { width: 113px; } .c8 { width: 78px; }
.prints { display: flex; align-items: center; gap: 8px; padding-left: 3px; margin-right: -5px; }
svg.note { width: 26px; height: 28px; }
svg.check { width: 24px; height: 28px; }
svg.medical { width: 32px; height: 26px; }
.ink { position: absolute; left: 0; top: 0; width: 480px; height: 210px; pointer-events: none; }
.legend-title { padding: 3px 2px 2px; }
.legend-row { display: flex; align-items: center; gap: 3px; padding-left: 2px; }
.swatch { width: 30px; height: 22px; }
.orange { background: #fc8649; }
.yellow { background: #fad977; }

.taskbar { flex: none; height: 40px; display: flex; align-items: stretch; background: linear-gradient(90deg, #4b2c36, #4e3639 50%, #4c2b32); }
.start { width: 48px; display: grid; place-items: center; }
.search { flex: none; width: 288px; margin-right: 2px; padding: 0 11px; display: flex; align-items: center; border: 1px solid #666; background: #323232; }
.search input { flex: 1; min-width: 0; margin-left: 11px; border: 0; padding: 0; outline: 0; background: none; color: #ddd; font: 14px/20px "Open Sans", "Noto Sans", sans-serif; }
.search input::placeholder { color: #ccc; opacity: 1; }
.search .nuts { width: 58px; height: 34px; }
.app { flex: none; width: 49px; padding: 0 4px; }
.app svg { width: 24px; height: 34px; margin: 2px auto 0; }
.app.open { background: linear-gradient(#79cfc4, #79cfc4) center bottom / 40px 2px no-repeat; }
.app.current { background: linear-gradient(#79cfc4, #79cfc4) center bottom / 100% 2px no-repeat #7b6468; }
.tray { margin-left: auto; display: flex; align-items: center; }
.news { margin-right: 20px; }
.tr { width: 24px; height: 40px; display: grid; place-items: center; }
.lang, .clock { display: flex; flex-direction: column; align-items: center; gap: 1px; font-size: 11px; line-height: 16px; }
.lang { width: 34px; }
.clock { width: 74px; }
.notif { position: relative; margin-left: 10px; }
.badge { position: absolute; left: 7px; top: 6px; width: 18px; height: 18px; border: 1px solid #999; border-radius: 9px; background: #3b3435; font-size: 10px; line-height: 16px; text-align: center; }
.peek { width: 1px; height: 40px; margin: 0 4px 0 19px; background: #8b7477; }
</style>
